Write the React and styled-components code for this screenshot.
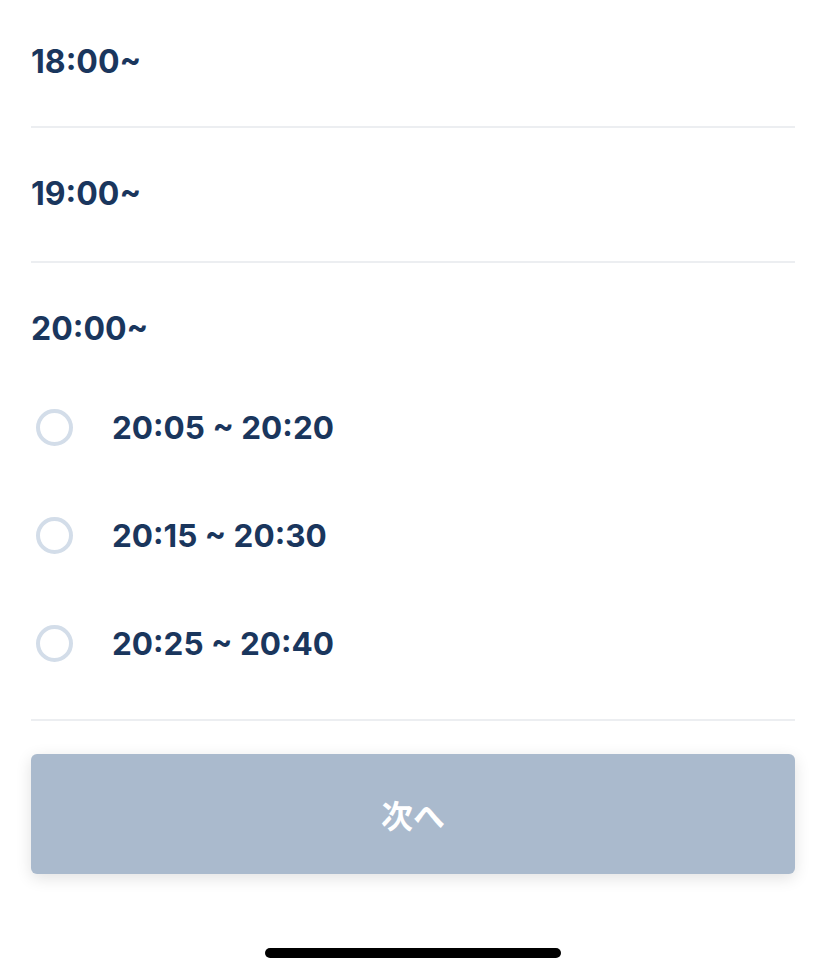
import React, { useState } from "react";
import styled, { createGlobalStyle } from "styled-components";

const GlobalStyle = createGlobalStyle`
  html, body {
    margin: 0;
    padding: 0;
    background: #fff;
  }
  body {
    font-family: Inter, "Noto Sans CJK JP", sans-serif;
    -webkit-font-smoothing: antialiased;
  }
`;

const Page = styled.div`
  width: 826px;
  height: 972px;
  box-sizing: border-box;
  padding: 0 31px;
  display: flex;
  flex-direction: column;
  position: relative;
`;

const SectionTitle = styled.h3`
  margin: 0;
  height: 133px;
  box-sizing: border-box;
  padding-bottom: 3px;
  display: flex;
  align-items: center;
  color: #1a365d;
  font-size: 32px;
  font-weight: 700;
`;

const Section = styled.section`
  border-bottom: 2px solid #eceef1;

  &:first-child ${SectionTitle} {
    height: 126px;
  }
`;

const SlotList = styled.div`
  display: flex;
  flex-direction: column;
  margin-top: -23px;
  padding-bottom: 22px;
`;

const Slot = styled.label`
  height: 108px;
  display: flex;
  align-items: center;
  gap: 39px;
  cursor: pointer;
  padding-left: 5px;
`;

const Radio = styled.span`
  width: 37px;
  height: 37px;
  box-sizing: border-box;
  border-radius: 50%;
  border: 4px solid ${(p) => (p.checked ? "#1a365d" : "#d3dde9")};
  background: ${(p) => (p.checked ? "#1a365d" : "#fff")};
  flex-shrink: 0;
`;

const SlotText = styled.span`
  color: #1a365d;
  font-size: 31.5px;
  font-weight: 700;
`;

const NextButton = styled.button`
  margin-top: 33px;
  height: 120px;
  width: 100%;
  border: none;
  border-radius: 6px;
  background: ${(p) => (p.active ? "#1a365d" : "#aabacd")};
  color: #fff;
  font-family: "Noto Sans CJK JP", sans-serif;
  font-size: 32px;
  font-weight: 700;
  box-shadow: 0 4px 16px rgba(0, 0, 0, 0.12);
`;

const HomeIndicator = styled.div`
  position: absolute;
  left: 265px;
  bottom: 14px;
  width: 296px;
  height: 10px;
  border-radius: 5px;
  background: #000;
`;

const groups = [
  { title: "18:00~", slots: [] },
  { title: "19:00~", slots: [] },
  {
    title: "20:00~",
    slots: ["20:05 ~ 20:20", "20:15 ~ 20:30", "20:25 ~ 20:40"],
  },
];

export default function App() {
  const [selected, setSelected] = useState(null);
  return (
    <Page>
      <GlobalStyle />
      {groups.map((g) => (
        <Section key={g.title}>
          <SectionTitle>{g.title}</SectionTitle>
          {g.slots.length > 0 && (
            <SlotList>
              {g.slots.map((s) => (
                <Slot key={s} onClick={() => setSelected(s)}>
                  <Radio checked={selected === s} />
                  <SlotText>{s}</SlotText>
                </Slot>
              ))}
            </SlotList>
          )}
        </Section>
      ))}
      <NextButton active={!!selected}>次へ</NextButton>
      <HomeIndicator />
    </Page>
  );
}
